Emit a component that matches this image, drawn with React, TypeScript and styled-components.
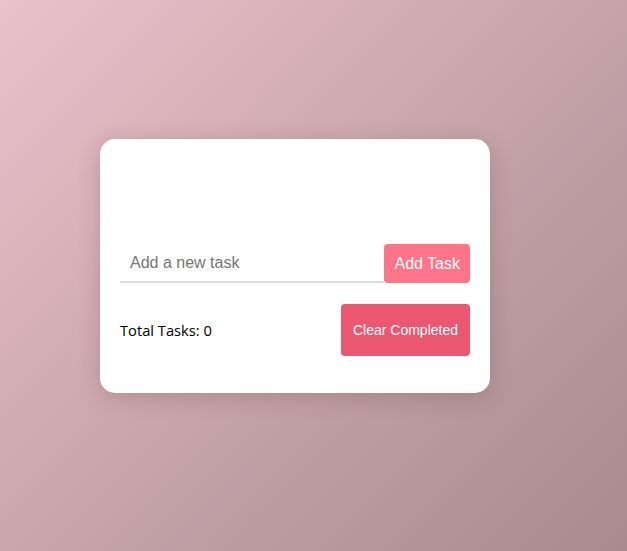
import React, { useState } from "react";
import styled, { createGlobalStyle } from "styled-components";

const Global = createGlobalStyle`
  html, body { margin: 0; padding: 0; }
  body {
    min-height: 551px;
    background: linear-gradient(135deg, #ebc1cb 0%, #d3adb4 35%, #b89a9f 70%, #a98a8f 100%);
    font-family: "Liberation Sans", Arial, sans-serif;
  }
`;

const Page = styled.div`
  min-height: 551px;
  box-sizing: border-box;
  padding: 139px 0 0 100px;
  display: flex;
  align-items: flex-start;
`;

const Card = styled.div`
  width: 390px;
  box-sizing: border-box;
  background: #ffffff;
  border-radius: 15px;
  padding: 20px 20px 37px;
  box-shadow: 0 4px 22px rgba(90, 40, 50, 0.22);
  display: flex;
  flex-direction: column;
`;

const TaskList = styled.ul`
  list-style: none;
  margin: 0;
  padding: 0;
  min-height: 85px;
`;

const InputRow = styled.div`
  display: flex;
  align-items: stretch;
`;

const TaskInput = styled.input`
  flex: 1;
  min-width: 0;
  border: none;
  border-bottom: 2px solid #dddddd;
  padding: 0 10px;
  font-family: "Liberation Sans", Arial, sans-serif;
  font-size: 16px;
  color: #333;
  outline: none;
  background: transparent;
  &::placeholder { color: #757575; }
`;

const Button = styled.button<{ $tone: "add" | "clear" }>`
  border: none;
  border-radius: 4px;
  color: #ffffff;
  font-family: "Liberation Sans", Arial, sans-serif;
  cursor: pointer;
  background: ${(p) => (p.$tone === "add" ? "#ff7489" : "#eb5770")};
  font-size: ${(p) => (p.$tone === "add" ? "16px" : "14px")};
  line-height: ${(p) => (p.$tone === "add" ? "19px" : "16px")};
  padding: ${(p) => (p.$tone === "add" ? "10px 10px" : "18px 12px")};
  min-height: ${(p) => (p.$tone === "add" ? "auto" : "52px")};
`;

const Footer = styled.div`
  display: flex;
  justify-content: space-between;
  align-items: center;
  margin-top: 21px;
`;

const Count = styled.span`
  font-family: "Open Sans", "Noto Sans", sans-serif;
  font-size: 14.7px;
  color: #000;
`;

export default function App() {
  const [text, setText] = useState("");
  const [tasks] = useState<string[]>([]);
  return (
    <>
      <Global />
      <Page>
        <Card>
          <TaskList>
            {tasks.map((t) => (
              <li key={t}>{t}</li>
            ))}
          </TaskList>
          <InputRow>
            <TaskInput
              placeholder="Add a new task"
              value={text}
              onChange={(e) => setText(e.target.value)}
            />
            <Button $tone="add">Add Task</Button>
          </InputRow>
          <Footer>
            <Count>Total Tasks: {tasks.length}</Count>
            <Button $tone="clear">Clear Completed</Button>
          </Footer>
        </Card>
      </Page>
    </>
  );
}
